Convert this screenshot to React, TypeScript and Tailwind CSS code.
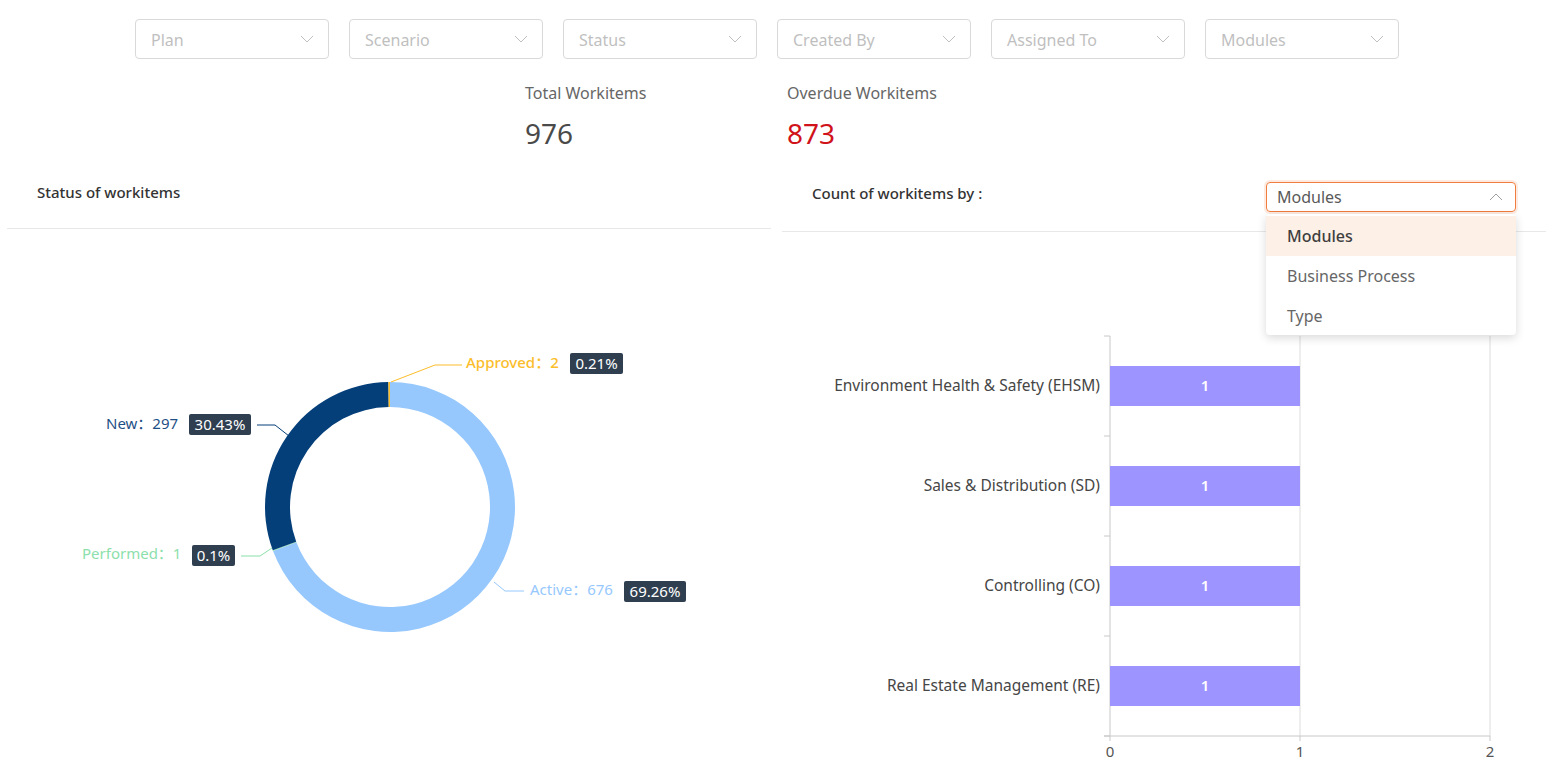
import React from "react";

const font = { fontFamily: '"Noto Sans", "Noto Sans CJK SC", "Open Sans", sans-serif' };

const filters = ["Plan", "Scenario", "Status", "Created By", "Assigned To", "Modules"];

const Chevron = ({ up = false, color = "#bfbfbf" }: { up?: boolean; color?: string }) => (
  <svg width="14" height="8" viewBox="0 0 14 8" fill="none">
    <polyline
      points={up ? "1,7 7,1 13,7" : "1,1 7,7 13,1"}
      stroke={color}
      strokeWidth="1"
      fill="none"
    />
  </svg>
);

// donut segment, angles in degrees clockwise from 12 o'clock
const arcPath = (cx: number, cy: number, r0: number, r1: number, a0: number, a1: number) => {
  const rad = (a: number) => (a * Math.PI) / 180;
  const p = (r: number, a: number) => [cx + r * Math.sin(rad(a)), cy - r * Math.cos(rad(a))];
  const large = a1 - a0 > 180 ? 1 : 0;
  const [x1, y1] = p(r1, a0);
  const [x2, y2] = p(r1, a1);
  const [x3, y3] = p(r0, a1);
  const [x4, y4] = p(r0, a0);
  return `M${x1},${y1} A${r1},${r1} 0 ${large} 1 ${x2},${y2} L${x3},${y3} A${r0},${r0} 0 ${large} 0 ${x4},${y4} Z`;
};

const slices = [
  { name: "Active", value: 676, color: "#96c8fe" },
  { name: "Performed", value: 1, color: "#8ce0ab" },
  { name: "New", value: 297, color: "#053f7a" },
  { name: "Approved", value: 2, color: "#fbbd2a" },
];

const Donut = () => {
  const total = slices.reduce((s, d) => s + d.value, 0);
  let acc = 0;
  const cx = 390;
  const cy = 507;
  return (
    <svg width="764" height="540" viewBox="7 229 764 540" style={font}>
      {slices.map((d) => {
        const a0 = (acc / total) * 360;
        acc += d.value;
        const a1 = (acc / total) * 360;
        return <path key={d.name} d={arcPath(cx, cy, 100, 125, a0, a1)} fill={d.color} />;
      })}

      {/* Approved */}
      <polyline points="391,382 435,365 462,365" stroke="#fbbd2a" fill="none" />
      <text x="466" y="368" fontSize="15" fill="#fbbd2a" fontWeight="500">Approved：2</text>
      <rect x="570" y="353" width="53" height="21" rx="2" fill="#2f3f50" />
      <text x="596.5" y="368.5" fontSize="15" fill="#fff" textAnchor="middle">0.21%</text>

      {/* New */}
      <polyline points="257,425 275,425 289,436" stroke="#053f7a" fill="none" />
      <text x="106" y="429" fontSize="15" fill="#1e4f86">New：297</text>
      <rect x="189" y="414" width="62" height="21" rx="2" fill="#2f3f50" />
      <text x="220" y="429.5" fontSize="15" fill="#fff" textAnchor="middle">30.43%</text>

      {/* Performed */}
      <polyline points="241,556 260,556 272,548" stroke="#8ce0ab" fill="none" />
      <text x="82" y="559" fontSize="15" fill="#8ce0ab">Performed：1</text>
      <rect x="192" y="545" width="43" height="21" rx="2" fill="#2f3f50" />
      <text x="213.5" y="560.5" fontSize="15" fill="#fff" textAnchor="middle">0.1%</text>

      {/* Active */}
      <polyline points="494,582 505,591 524,591" stroke="#96c8fe" fill="none" />
      <text x="530" y="595" fontSize="15" fill="#96c8fe">Active：676</text>
      <rect x="624" y="581" width="62" height="21" rx="2" fill="#2f3f50" />
      <text x="655" y="596.5" fontSize="15" fill="#fff" textAnchor="middle">69.26%</text>
    </svg>
  );
};

const bars = [
  "Environment Health & Safety (EHSM)",
  "Sales & Distribution (SD)",
  "Controlling (CO)",
  "Real Estate Management (RE)",
];

const BarChart = () => (
  <svg width="764" height="538" viewBox="782 232 764 538" style={font}>
    <line x1="1300" y1="336" x2="1300" y2="736" stroke="#dcdcdc" />
    <line x1="1490" y1="336" x2="1490" y2="736" stroke="#dcdcdc" />
    <line x1="1110" y1="336" x2="1110" y2="736" stroke="#c8c8c8" />
    {[336, 436, 536, 636, 736].map((y) => (
      <line key={y} x1="1104" y1={y} x2="1110" y2={y} stroke="#c8c8c8" />
    ))}
    <line x1="1104" y1="736" x2="1490" y2="736" stroke="#c8c8c8" />
    {[1110, 1300, 1490].map((x) => (
      <line key={x} x1={x} y1="736" x2={x} y2="741" stroke="#c8c8c8" />
    ))}
    {["0", "1", "2"].map((t, i) => (
      <text key={t} x={1110 + i * 190} y="757" fontSize="15" fill="#555" textAnchor="middle">
        {t}
      </text>
    ))}
    {bars.map((b, i) => {
      const y = 366 + i * 100;
      return (
        <g key={b}>
          <rect x="1110" y={y} width="190" height="40" fill="#9d94ff" />
          <text x="1205" y={y + 25} fontSize="15" fill="#fff" fontWeight="600" textAnchor="middle">
            1
          </text>
          <text x="1100" y={y + 25} fontSize="15.5" fill="#464646" textAnchor="end">
            {b}
          </text>
        </g>
      );
    })}
  </svg>
);

export default function App() {
  return (
    <div className="relative w-full h-[771px] bg-white overflow-hidden" style={font}>
      {/* filters */}
      <div className="flex gap-5 pl-[135px] pt-[19px]">
        {filters.map((f) => (
          <div
            key={f}
            className="w-[194px] h-[40px] border border-[#d9d9d9] rounded flex items-center justify-between pl-[15px] pr-[14px]"
          >
            <span className="text-[16px] text-[#bfbfbf] mt-[1px]">{f}</span>
            <Chevron />
          </div>
        ))}
      </div>

      {/* stats */}
      <div className="flex pl-[525px] pt-[22px] h-[112px]">
        <div className="w-[262px]">
          <div className="text-[16px] leading-[24px] text-[#666]">Total Workitems</div>
          <div className="text-[28px] leading-[40px] mt-[8px] text-[#4a4a4a]">976</div>
        </div>
        <div className="w-[262px]">
          <div className="text-[16px] leading-[24px] text-[#666]">Overdue Workitems</div>
          <div className="text-[28px] leading-[40px] mt-[8px] text-[#d0121b]">873</div>
        </div>
      </div>

      {/* panels */}
      <div className="flex gap-[11px] pl-[7px]">
        <div className="w-[764px]">
          <div className="h-[58px] border-b border-[#e8e8e8] pl-[30px] pt-[9px]">
            <span className="text-[15px] leading-[22px] font-medium text-[#333]">Status of workitems</span>
          </div>
          <Donut />
        </div>
        <div className="w-[764px]">
          <div className="h-[61px] border-b border-[#e8e8e8] flex items-start justify-between pl-[30px] pr-[30px] pt-[11px]">
            <span className="text-[15px] leading-[22px] font-medium text-[#333]">
              Count of workitems by :
            </span>
            <div className="w-[250px] h-[30px] border border-[#f07c3e] rounded shadow-[0_0_0_2px_rgba(240,124,62,0.15)] flex items-center justify-between pl-[10px] pr-[12px]">
              <span className="text-[16px] text-[#595959]">Modules</span>
              <Chevron up color="#a0a0a0" />
            </div>
          </div>
          <BarChart />
        </div>
      </div>

      {/* open dropdown */}
      <div className="absolute left-[1266px] top-[214px] w-[250px] bg-white rounded shadow-[0_3px_10px_rgba(0,0,0,0.15)] pt-[2px]">
        <div className="h-[40px] flex items-center px-[21px] bg-[#fdf0e6] text-[16px] font-medium text-[#3f3f3f]">
          Modules
        </div>
        <div className="h-[40px] flex items-center px-[21px] text-[16px] text-[#666]">Business Process</div>
        <div className="h-[39px] flex items-center px-[21px] text-[16px] text-[#666]">Type</div>
      </div>
    </div>
  );
}
